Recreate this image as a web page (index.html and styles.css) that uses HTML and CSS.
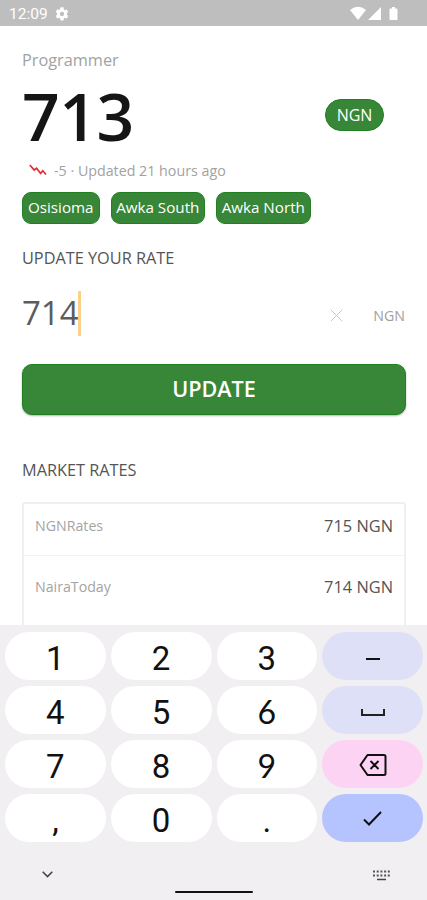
FILE: index.html
```html
<!DOCTYPE html>
<html lang="en">
<head>
    <meta charset="UTF-8">
    <meta name="viewport" content="width=device-width, initial-scale=1.0">
    <title>Update your rate</title>
    <link rel="stylesheet" href="styles.css">
</head>
<body>
    <header class="status-bar">
        <span class="clock">12:09</span>
        <svg class="gear" width="16" height="16" viewBox="0 0 24 24"><path fill="#fff" d="M19.14 12.94c.04-.3.06-.61.06-.94s-.02-.64-.07-.94l2.03-1.58a.49.49 0 0 0 .12-.61l-1.92-3.32a.49.49 0 0 0-.59-.22l-2.39.96a7 7 0 0 0-1.62-.94l-.36-2.54A.48.48 0 0 0 13.92 2h-3.84a.48.48 0 0 0-.47.41l-.36 2.54c-.59.24-1.13.57-1.62.94l-2.39-.96a.48.48 0 0 0-.59.22L2.74 8.87a.48.48 0 0 0 .12.61l2.03 1.58c-.05.3-.09.63-.09.94s.02.64.07.94l-2.03 1.58a.49.49 0 0 0-.12.61l1.92 3.32c.12.22.37.29.59.22l2.39-.96c.5.38 1.03.7 1.62.94l.36 2.54c.05.24.24.41.48.41h3.84c.24 0 .44-.17.47-.41l.36-2.54a7 7 0 0 0 1.62-.94l2.39.96c.22.08.47 0 .59-.22l1.92-3.32a.48.48 0 0 0-.12-.61zM12 15.2a3.2 3.2 0 1 1 0-6.4 3.2 3.2 0 0 1 0 6.4z"/></svg>
        <svg class="signals" width="50" height="16" viewBox="0 0 50 16">
            <path fill="#fff" d="M1 4Q9 -2.500 17 4L9 14zM32 1v13H19zM41.500 2.500H43V1h3v1.500h1.500q1 0 1 1V13q0 1-1 1h-6q-1 0-1-1V3.500q0-1 1-1z"/>
        </svg>
    </header>

    <main>
        <p class="role">Programmer</p>
        <div class="rate-row">
            <h1>713</h1>
            <span class="currency">NGN</span>
        </div>
        <p class="updated">
            <svg width="18" height="12" viewBox="0 0 18 12"><path fill="none" stroke="#e02b33" stroke-width="1.700" d="M.8 1l4.400 5 2.400-1.800 4 5.200 2.200-2.600L17 10.500"/></svg>
            <span>-5 · Updated 21 hours ago</span>
        </p>
        <div class="chips">
            <span class="chip">Osisioma</span>
            <span class="chip wide">Awka South</span>
            <span class="chip wide">Awka North</span>
        </div>

        <h2>UPDATE YOUR RATE</h2>
        <div class="rate-input">
            <span class="value">714</span>
            <span class="caret"></span>
            <svg class="clear" width="13" height="13" viewBox="0 0 13 13"><path stroke="#c4c4c4" d="M.8.8l11.400 11.400M12.200.8L.8 12.200"/></svg>
            <span class="unit">NGN</span>
        </div>
        <button class="update">UPDATE</button>

        <h2 class="market-title">MARKET RATES</h2>
        <div class="market">
            <div class="market-row"><span class="source">NGNRates</span><span class="price">715 NGN</span></div>
            <div class="market-row tall"><span class="source">NairaToday</span><span class="price">714 NGN</span></div>
        </div>
    </main>

    <section class="keyboard">
        <div class="keys">
            <span class="key">1</span>
            <span class="key">2</span>
            <span class="key">3</span>
            <span class="key soft"><svg width="14" height="4" viewBox="0 0 14 4"><path stroke="#111" stroke-width="2" d="M0 2h14"/></svg></span>
            <span class="key">4</span>
            <span class="key">5</span>
            <span class="key straight">6</span>
            <span class="key soft"><svg width="24" height="8" viewBox="0 0 24 8"><path fill="none" stroke="#222" stroke-width="2" d="M1 0v6h22V0"/></svg></span>
            <span class="key">7</span>
            <span class="key">8</span>
            <span class="key straight">9</span>
            <span class="key delete"><svg width="28" height="22" viewBox="0 0 28 22"><path fill="none" stroke="#111" stroke-width="2" stroke-linejoin="round" d="M8.500 1H25q1.500 0 1.500 1.500v17q0 1.500-1.500 1.500H8.500L1.500 11zM11.500 7l8 8M19.500 7l-8 8"/></svg></span>
            <span class="key">,</span>
            <span class="key">0</span>
            <span class="key">.</span>
            <span class="key enter"><svg width="19" height="15" viewBox="0 0 19 15"><path fill="none" stroke="#111" stroke-width="2" d="M1 8.500l5 5L18 1"/></svg></span>
        </div>
        <div class="nav">
            <svg width="11" height="7" viewBox="0 0 11 7"><path fill="none" stroke="#444" stroke-width="1.500" d="M.7.8l4.800 4.800L10.300.8"/></svg>
            <span class="home"></span>
            <svg class="layout" width="17" height="11" viewBox="0 0 17 11"><path fill="none" stroke="#555" stroke-width="2" stroke-dasharray="2 1.700" d="M0 1.500h17M0 5.500h17"/><path stroke="#444" stroke-width="1.500" d="M4 9.500h9"/></svg>
        </div>
    </section>
</body>
</html>
```
FILE: styles.css
```css
* {
    box-sizing: border-box;
}
body {
    margin: 0;
    height: 900px;
    overflow: hidden;
    display: flex;
    flex-direction: column;
    background: #fff;
    font-family: "Open Sans", sans-serif;
}
.status-bar {
    height: 26px;
    flex: none;
    display: flex;
    align-items: center;
    padding: 2px 28px 0 9px;
    background: #bebebe;
    color: #fff;
}
.clock {
    font-family: Roboto, sans-serif;
    font-size: 15.500px;
    line-height: 20px;
    width: 45px;
}
.signals {
    margin-left: auto;
}
main {
    height: 599px;
    flex: none;
    overflow: hidden;
    padding: 22px 21px 0 22px;
}
p, h1, h2 {
    margin: 0;
}
.role {
    font-size: 16.300px;
    line-height: 24px;
    color: #a2a2a2;
}
.rate-row {
    display: flex;
    align-items: center;
    justify-content: space-between;
    height: 86px;
    padding-right: 22px;
}
h1 {
    font-size: 66px;
    line-height: 86px;
    font-weight: 550;
    letter-spacing: -0.5px;
    color: #151515;
}
.currency {
    width: 59px;
    height: 32px;
    border: 1px solid #218021;
    border-radius: 16px;
    background: #388638;
    color: #fff;
    font-size: 16px;
    line-height: 31px;
    text-align: center;
}
.updated {
    display: flex;
    align-items: center;
    height: 24px;
    padding-left: 7px;
    font-size: 14.250px;
    color: #a2a2a2;
}
.updated span {
    margin-left: 7px;
}
.chips {
    display: flex;
    gap: 11px;
    margin-top: 10px;
}
.chip {
    width: 77.500px;
    height: 32px;
    border: 1px solid #218021;
    border-radius: 9px;
    background: #388638;
    color: #fff;
    font-size: 15.200px;
    line-height: 29px;
    text-align: center;
    white-space: nowrap;
}
.chip.wide {
    width: 94.500px;
}
h2 {
    margin-top: 22px;
    font-size: 16.300px;
    line-height: 24px;
    font-weight: 400;
    color: #555;
}
.rate-input {
    display: flex;
    align-items: center;
    height: 46px;
    margin-top: 20px;
}
.value {
    margin-bottom: 2px;
    font-size: 33px;
    color: #5c5c5c;
}
.caret {
    width: 3px;
    height: 45px;
    margin-left: -1px;
    background: #fdd08a;
}
.clear {
    margin: 4px 30px 0 auto;
}
.unit {
    margin: 4px 1px 0 0;
    font-size: 14.200px;
    color: #a0a0a0;
}
.update {
    display: block;
    width: 100%;
    height: 51px;
    margin-top: 28px;
    border: 1px solid #218021;
    border-radius: 10px;
    background: #388638;
    box-shadow: 0 1px 2px rgba(0, 0, 0, 0.3);
    color: #fff;
    font-family: inherit;
    font-size: 21.600px;
    font-weight: 600;
    padding: 0 0 2px;
}
.market-title {
    margin-top: 43px;
}
.market {
    margin-top: 20px;
    height: 160px;
    border: 2px solid #efefef;
    border-radius: 3px;
}
.market-row {
    display: flex;
    align-items: center;
    justify-content: space-between;
    height: 52px;
    padding: 0 11px;
    padding-bottom: 9px;
    border-bottom: 1px solid #f2f2f2;
}
.market-row.tall {
    height: 70px;
    border: none;
}
.source {
    font-size: 14.200px;
    color: #a4a4a4;
}
.price {
    font-size: 16.400px;
    color: #555;
}
.keyboard {
    flex: 1;
    padding: 7px 4px 0 5px;
    background: #f1eff2;
}
.keys {
    display: grid;
    grid-template-columns: repeat(4, 1fr);
    grid-auto-rows: 48px;
    gap: 6px 5px;
}
.key {
    display: flex;
    align-items: center;
    justify-content: center;
    padding-top: 5px;
    border-radius: 24px;
    background: #fff;
    color: #111;
    font-family: Roboto, sans-serif;
    font-size: 33px;
    font-weight: 400;
    line-height: 44px;
}
.key.straight {
    padding-top: 3px;
    font-family: Lato, sans-serif;
    font-size: 32px;
}
.key.soft {
    padding-top: 6px;
    background: #dee0f8;
}
.key.delete {
    padding-top: 2px;
    background: #fdd3f3;
}
.key.enter {
    padding-top: 0;
    background: #b5c3ff;
}
.nav {
    display: flex;
    justify-content: space-between;
    padding: 29px 37px 0 37px;
}
.home {
    width: 78px;
    height: 2px;
    margin: 20px 0 0 1px;
    border-radius: 1px;
    background: #111;
}
.layout {
    margin: -1px -4px 0 0;
}
```
